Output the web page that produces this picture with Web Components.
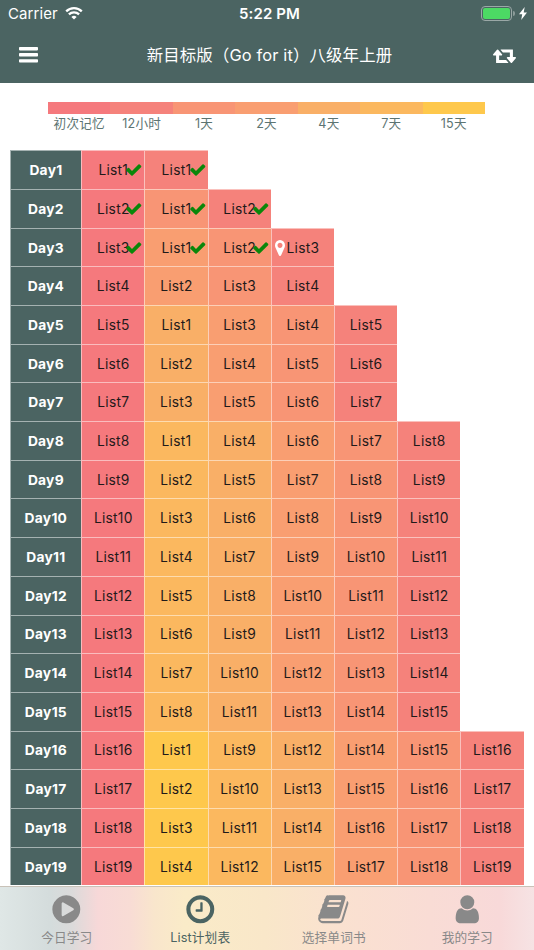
<!DOCTYPE html>
<html lang="zh-CN">
<head>
<meta charset="utf-8">
<title>List计划表</title>
<style>
  body {
    margin: 0;
    background: #fff;
    font-family: Inter, "Noto Sans CJK SC", sans-serif;
  }
</style>
</head>
<body>
<plan-page></plan-page>

<script>
const COLORS = {
  first: '#f5797d',
  h12: '#f5827b',
  d1: '#f89575',
  d2: '#f99e71',
  d4: '#f9af67',
  d7: '#fbb85f',
  d15: '#fec84c'
};

const ICONS = {
  bars: ['0 0 19 16', '<rect y="0" width="19" height="3.4" rx=".8"/><rect y="6.1" width="19" height="3.4" rx=".8"/><rect y="12.2" width="19" height="3.4" rx=".8"/>'],
  wifi: ['0 0 18 14', '<path d="M9 13.6 6.4 10.9a3.8 3.8 0 0 1 5.2 0z"/><path d="M3.9 8.4a7.3 7.3 0 0 1 10.2 0M1.2 5.4a11.1 11.1 0 0 1 15.6 0" fill="none" stroke="currentColor" stroke-width="2.3"/>'],
  bolt: ['0 0 8 13', '<path d="M5.7 0 0 7.3h3.2L2.2 13 8 5.5H4.7z"/>'],
  retweet: ['0 256 1920 1280', '<path d="M1280 1504q0 13-9.500 22.500t-22.500 9.500h-960q-8 0-13.500-2t-9-7-5.500-8-3-11.500-1-11.500v-600h-192q-26 0-45-19t-19-45q0-24 15-41l320-384q19-22 49-22t49 22l320 384q15 17 15 41 0 26-19 45t-45 19h-192v384h576q16 0 25 11l160 192q7 10 7 21zm640-416q0 24-15 41l-320 384q-20 23-49 23t-49-23l-320-384q-15-17-15-41 0-26 19-45t45-19h192v-384h-576q-16 0-25-12l-160-192q-7-9-7-20 0-13 9.500-22.500t22.500-9.500h960q8 0 13.500 2t9 7 5.500 8 3 11.500 1 11.500v600h192q26 0 45 19t19 45z"/>'],
  check: ['0 0 1792 1792', '<path d="M1671 566q0 40-28 68l-724 724-136 136q-28 28-68 28t-68-28l-136-136-362-362q-28-28-28-68t28-68l136-136q28-28 68-28t68 28l294 295 656-657q28-28 68-28t68 28l136 136q28 28 28 68z"/>'],
  marker: ['384 128 1024 1536', '<path d="M1152 640q0-106-75-181t-181-75-181 75-75 181 75 181 181 75 181-75 75-181zm256 0q0 109-33 179l-364 774q-16 33-47.500 52t-67.500 19-67.500-19-46.500-52l-365-774q-33-70-33-179 0-212 150-362t362-150 362 150 150 362z"/>'],
  play: ['0 0 1792 1792', '<path d="M896 128q209 0 385.500 103t279.500 279.500 103 385.500-103 385.500-279.500 279.500-385.500 103-385.500-103-279.500-279.500-103-385.500 103-385.500 279.500-279.500 385.500-103zm384 823q32-18 32-55t-32-55l-544-320q-31-19-64-1-32 19-32 56v640q0 37 32 56 16 8 32 8 17 0 32-9z"/>'],
  clock: ['0 0 1792 1792', '<path d="M1024 544v448q0 14-9 23t-23 9h-320q-14 0-23-9t-9-23v-64q0-14 9-23t23-9h224v-352q0-14 9-23t23-9h64q14 0 23 9t9 23zm416 352q0-148-73-273t-198-198-273-73-273 73-198 198-73 273 73 273 198 198 273 73 273-73 198-198 73-273zm224 0q0 209-103 385.500t-279.500 279.500-385.500 103-385.500-103-279.500-279.500-103-385.500 103-385.500 279.500-279.500 385.500-103 385.500 103 279.500 279.500 103 385.500z"/>'],
  book: ['0 0 1792 1792', '<path d="M1703 478q40 57 18 129l-275 906q-19 64-76.500 107.500t-122.500 43.500h-923q-77 0-148.500-53.500t-99.500-131.500q-24-67-2-127 0-4 3-27t4-37q1-8-3-21.500t-3-19.500q2-11 8-21t16.500-23.500 16.500-23.500q23-38 45-91.500t30-91.500q3-10 .5-30t-.5-28q3-11 17-28t17-23q21-36 42-92t25-90q1-9-2.500-32t.5-28q4-13 22-30.500t22-22.500q19-26 42.500-84.500t27.500-96.500q1-8-3-25.500t-2-26.500q2-8 9-18t18-23 17-21q8-12 16.500-30.500t15-35 16-36 19.500-32 26.500-23.500 36-11.500 47.500 5.500l-1 3q38-9 51-9h761q74 0 114 56t18 130l-274 906q-36 119-71.500 153.500t-128.500 34.500h-869q-27 0-38 15-11 16-1 43 24 70 144 70h923q29 0 56-15.500t35-41.500l300-987q7-22 5-57 38 15 59 43zm-1064 2q-4 13 2 22.500t20 9.500h608q13 0 25.500-9.500t16.500-22.500l21-64q4-13-2-22.500t-20-9.500h-608q-13 0-25.500 9.500t-16.500 22.500zm-83 256q-4 13 2 22.500t20 9.500h608q13 0 25.500-9.500t16.500-22.500l21-64q4-13-2-22.500t-20-9.500h-608q-13 0-25.500 9.500t-16.500 22.500z"/>'],
  user: ['0 0 1792 1792', '<path d="M1536 1399q0 109-62.500 187t-150.500 78h-854q-88 0-150.500-78t-62.500-187q0-85 8.500-160.500t31.500-152 58.500-131 94-89 134.500-34.500q131 128 313 128t313-128q76 0 134.500 34.500t94 89 58.500 131 31.500 152 8.500 160.500zm-256-887q0 159-112.500 271.500t-271.500 112.500-271.500-112.500-112.500-271.500 112.500-271.500 271.500-112.500 271.500 112.500 112.500 271.500z"/>']
};

class AppIcon extends HTMLElement {
  connectedCallback() {
    const [box, shape] = ICONS[this.getAttribute('name')];
    this.attachShadow({mode: 'open'}).innerHTML = `<style>
      :host { display: block; flex: none; }
      svg { display: block; width: 100%; height: 100%; fill: currentColor; }
    </style>
    <svg viewBox="${box}" preserveAspectRatio="none">${shape}</svg>`;
  }
}

class StatusBar extends HTMLElement {
  connectedCallback() {
    this.attachShadow({mode: 'open'}).innerHTML = `<style>
      :host {
        display: grid;
        grid-template-columns: 1fr auto 1fr;
        align-items: center;
        height: 27px;
        padding: 0 7px 0 8px;
        font-size: 15px;
        line-height: 27px;
      }
      .left, .right { display: flex; align-items: center; }
      .left { gap: 7px; letter-spacing: .1px; }
      .right { justify-content: flex-end; }
      .time { font-weight: 600; letter-spacing: .12px; padding-left: 4px; }
      .wifi { width: 18px; height: 14px; margin-top: -1px; }
      .battery {
        box-sizing: border-box;
        width: 31px;
        height: 15px;
        padding: 1px;
        border: 1px solid #9ba8a7;
        border-radius: 4px;
      }
      .battery i { display: block; height: 100%; border-radius: 2px; background: #4cd964; }
      .tip { width: 2px; height: 5px; margin: 0 4px 0 1px; border-radius: 0 2px 2px 0; background: #8b9b99; }
      .bolt { width: 8px; height: 13px; }
    </style>
    <div class="left"><span>Carrier</span><app-icon class="wifi" name="wifi"></app-icon></div>
    <div class="time">5:22 PM</div>
    <div class="right">
      <div class="battery"><i></i></div><div class="tip"></div>
      <app-icon class="bolt" name="bolt"></app-icon>
    </div>`;
  }
}

class NavBar extends HTMLElement {
  connectedCallback() {
    this.attachShadow({mode: 'open'}).innerHTML = `<style>
      :host {
        display: flex;
        align-items: center;
        justify-content: space-between;
        height: 56px;
        padding: 0 18px 0 19px;
        font-size: 16.4px;
        letter-spacing: .15px;
      }
      .title { margin: -3px 0 0 8px; }
      .bars { width: 19px; height: 16px; }
      .retweet { width: 23px; height: 15px; }
    </style>
    <app-icon class="bars" name="bars"></app-icon>
    <div class="title"><slot></slot></div>
    <app-icon class="retweet" name="retweet"></app-icon>`;
  }
}

class StageLegend extends HTMLElement {
  connectedCallback() {
    const names = ['初次记忆', '12小时', '1天', '2天', '4天', '7天', '15天'];
    const colors = Object.values(COLORS);
    this.attachShadow({mode: 'open'}).innerHTML = `<style>
      :host {
        display: grid;
        grid-template-columns: repeat(7, 1fr);
        margin: 19px 49px 0 48px;
        color: #5c7472;
        font-size: 12.6px;
        letter-spacing: .2px;
        line-height: 20px;
        text-align: center;
      }
      i { display: block; height: 12px; }
    </style>
    ${names.map((name, i) => `<div><i style="background:${colors[i]}"></i>${name}</div>`).join('')}`;
  }
}

class PlanCell extends HTMLElement {
  connectedCallback() {
    const mark = this.getAttribute('mark');
    this.attachShadow({mode: 'open'}).innerHTML = `<style>
      :host {
        display: flex;
        position: relative;
        box-sizing: border-box;
        align-items: center;
        justify-content: center;
        border: solid rgba(255, 255, 255, .5);
        border-width: 1px 0 0 1px;
      }
      .check, .marker { position: absolute; }
      .check { right: 1.5px; top: 10px; width: 17.5px; height: 17.5px; color: #0a870a; }
      .marker { left: 3.5px; top: 11px; width: 10px; height: 16px; color: #fff; }
    </style>
    <slot></slot>
    ${mark ? `<app-icon class="${mark}" name="${mark}"></app-icon>` : ''}`;
  }
}

class PlanTable extends HTMLElement {
  connectedCallback() {
    // lists come back for review this many days after the first reading
    const reviews = [[15, 'd15'], [7, 'd7'], [4, 'd4'], [2, 'd2'], [1, 'd1'], [0, 'h12']];
    let rows = '';
    for (let day = 1; day <= 19; day++) {
      const cells = [[day, 'first']];
      reviews.forEach(([gap, key]) => {
        if (day > gap) cells.push([day - gap, key]);
      });
      rows += `<div class="row"><plan-cell class="day">Day${day}</plan-cell>`;
      cells.forEach(([list, key], i) => {
        let mark = '';
        if (day <= 3) mark = day === 3 && i === 3 ? 'marker' : 'check';
        rows += `<plan-cell mark="${mark}" style="background:${COLORS[key]}">List${list}</plan-cell>`;
      });
      rows += '</div>';
    }
    this.attachShadow({mode: 'open'}).innerHTML = `<style>
      :host {
        display: block;
        margin: 16.3px 0 0 9.6px;
        color: #1f1a1a;
        font-size: 13.8px;
        letter-spacing: .25px;
      }
      .row {
        display: grid;
        grid-template-columns: 71.6px repeat(7, 63.2px);
        height: 38.69px;
      }
      .day { background: #4b6462; color: #fff; font-weight: 700; }
    </style>${rows}`;
  }
}

class TabItem extends HTMLElement {
  connectedCallback() {
    this.attachShadow({mode: 'open'}).innerHTML = `<style>
      :host {
        display: flex;
        flex: 1;
        flex-direction: column;
        align-items: center;
        padding-top: 6px;
        color: #898989;
        font-size: 12.7px;
        letter-spacing: .1px;
        line-height: 20px;
      }
      :host([active]) { color: #4b6462; }
      app-icon { width: 32.6px; height: 32.6px; margin-bottom: 2px; }
    </style>
    <app-icon name="${this.getAttribute('icon')}"></app-icon>
    <slot></slot>`;
  }
}

class TabBar extends HTMLElement {
  connectedCallback() {
    this.attachShadow({mode: 'open'}).innerHTML = `<style>
      :host {
        display: flex;
        box-sizing: border-box;
        height: 64px;
        border-top: 1px solid #c9c2b8;
        background: linear-gradient(90deg, #dfe7e6 0, #d4dcdc 50px, #dbdada 72px, #f7d8d8 98px, #f8dcd5 130px, #f9e6cc 155px, #faebc8 185px, #f9e7c9 265px, #fae1d0 340px, #f9dcd5 430px, #f8d9d9 500px, #f6e3e4 534px);
      }
    </style>
    <slot></slot>`;
  }
}

class PlanPage extends HTMLElement {
  connectedCallback() {
    this.attachShadow({mode: 'open'}).innerHTML = `<style>
      :host {
        display: flex;
        flex-direction: column;
        height: 950px;
        overflow: hidden;
      }
      header { height: 83px; background: #4b6462; color: #fff; }
      main { flex: 1; min-height: 0; overflow: hidden; }
    </style>
    <header>
      <status-bar></status-bar>
      <nav-bar>新目标版（Go for it）八级年上册</nav-bar>
    </header>
    <main>
      <stage-legend></stage-legend>
      <plan-table></plan-table>
    </main>
    <tab-bar>
      <tab-item icon="play">今日学习</tab-item>
      <tab-item icon="clock" active>List计划表</tab-item>
      <tab-item icon="book">选择单词书</tab-item>
      <tab-item icon="user">我的学习</tab-item>
    </tab-bar>`;
  }
}

customElements.define('app-icon', AppIcon);
customElements.define('status-bar', StatusBar);
customElements.define('nav-bar', NavBar);
customElements.define('stage-legend', StageLegend);
customElements.define('plan-cell', PlanCell);
customElements.define('plan-table', PlanTable);
customElements.define('tab-item', TabItem);
customElements.define('tab-bar', TabBar);
customElements.define('plan-page', PlanPage);
</script>
</body>
</html>
